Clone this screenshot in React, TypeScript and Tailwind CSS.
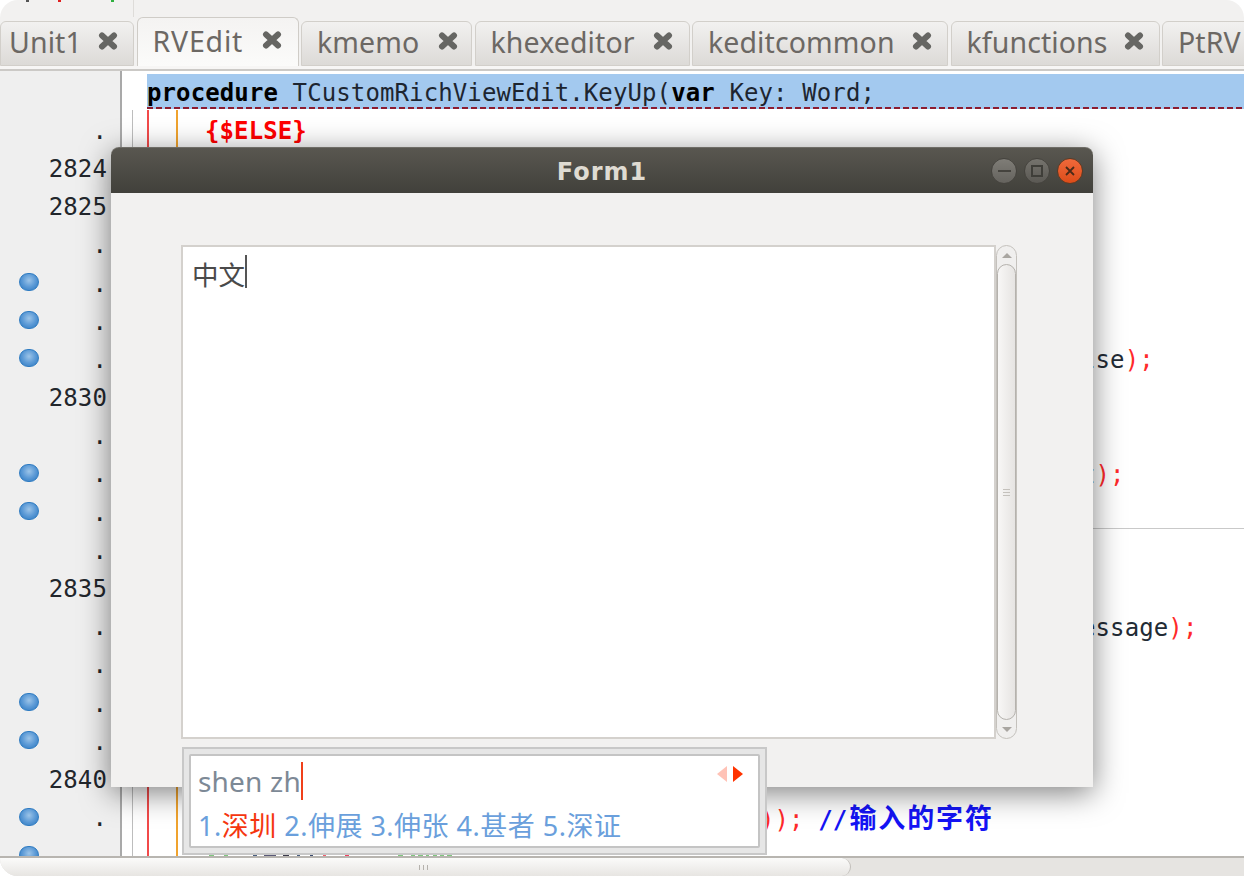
import React from 'react';

const codeFont = "font-['DejaVu_Sans_Mono','Noto_Sans_CJK_SC',monospace] text-[24px] tracking-[0.11px] leading-[38px]";

const tabs = [
  { name: 'Unit1', cls: 'w-[134px] pl-[8px] pr-[15px]' },
  { name: 'RVEdit', cls: 'w-[162px] pl-[15px] pr-[16px]', active: true },
  { name: 'kmemo', cls: 'w-[171px] pl-[15px] pr-[13px]' },
  { name: 'khexeditor', cls: 'w-[215px] pl-[15px] pr-[16px]' },
  { name: 'keditcommon', cls: 'w-[256px] pl-[15px] pr-[15px]' },
  { name: 'kfunctions', cls: 'w-[209px] pl-[15px] pr-[15px]' },
  { name: 'PtRV', cls: 'w-[120px] pl-[15px] pr-[15px]', noClose: true },
];

// gutter label per line, null = nothing
const gutter: (string | null)[] = [
  null, '.', '2824', '2825', '.', '.', '.', '.', '2830', '.', '.', '.', '.',
  '2835', '.', '.', '.', '.', '2840', '.', null,
];

const breakpoints = [5, 6, 7, 10, 11, 16, 17, 19, 20];

const specks = [
  [209, 5, '#7fc67f'], [224, 4, '#7fc67f'], [253, 4, '#4a5f80'], [264, 12, '#5a5a78'], [283, 6, '#3a3a4a'],
  [297, 3, '#4a5f80'], [310, 3, '#3a4a70'], [323, 3, '#f06070'], [345, 4, '#f04060'], [398, 5, '#7fc67f'],
  [411, 4, '#7fc67f'], [418, 5, '#7fc67f'], [426, 3, '#7fc67f'], [433, 4, '#7fc67f'], [440, 4, '#7fc67f'], [447, 5, '#7fc67f'],
] as const;

const CloseX = () => (
  <svg width="20" height="18" viewBox="0 0 20 18" className="shrink-0 -mt-[2px]">
    <path d="M4 3.5 L16 14.5 M16 3.5 L4 14.5" stroke="#666663" strokeWidth="6" strokeLinecap="round" />
    <path d="M8 9 L12 9" stroke="#666663" strokeWidth="7" />
  </svg>
);

const Ball = () => (
  <span className="block w-[20px] h-[18px] rounded-full border border-[#2f7cc2] bg-[radial-gradient(circle_at_50%_40%,#9cc4e8_0%,#5c9ad6_50%,#2a76be_100%)]" />
);

const CodeLine = ({ i }: { i: number }) => {
  if (i === 0) {
    return (
      <div className="relative ml-[25px] h-full bg-[#a3c9ef] whitespace-pre text-[#1d2530]">
        <b className="text-black">procedure</b> TCustomRichViewEdit.KeyUp(<b className="text-black">var</b> Key: Word;
        <span className="absolute left-0 right-0 bottom-0 h-[2px] bg-[repeating-linear-gradient(90deg,#8c1c30_0,#8c1c30_6px,transparent_6px,transparent_9px)]" />
      </div>
    );
  }
  if (i === 1) return <div className="pl-[83px] font-bold text-[#ff0000]">{'{$ELSE}'}</div>;
  if (i === 7) return <div className="pl-[959px] text-[#222b35]">lse<span className="text-[#ff2a2a]">);</span></div>;
  if (i === 10) return <div className="pl-[959px] text-[#222b35]">t<span className="text-[#ff2a2a]">);</span></div>;
  if (i === 11) return <div className="h-full border-b border-[#c9c9c9]" />;
  if (i === 14) return <div className="pl-[959px] text-[#222b35]">essage<span className="text-[#ff2a2a]">);</span></div>;
  if (i === 19) {
    return (
      <div className="pl-[638px] whitespace-pre text-[#ff2a2a]">
        {')); '}
        <b className="text-[#1414f5]">//<span className="ml-[2px] text-[27px] tracking-[1.9px]">输入的字符</span></b>
      </div>
    );
  }
  return null;
};

const Scrollbar = () => (
  <div className="w-[21px] h-full flex flex-col rounded-full border border-[#c4c1bc] bg-[#f0efee]">
    <div className="h-[18px] shrink-0 flex items-center justify-center">
      <span className="w-0 h-0 border-x-[5px] border-x-transparent border-b-[5px] border-b-[#a9a6a1]" />
    </div>
    <div className="flex-1 rounded-full border border-[#b5b2ad] bg-gradient-to-r from-[#f8f7f6] to-[#e6e4e2] flex items-center justify-center">
      <div className="flex flex-col gap-[2px]">
        <span className="block w-[7px] h-px bg-[#c4c1bc]" />
        <span className="block w-[7px] h-px bg-[#c4c1bc]" />
        <span className="block w-[7px] h-px bg-[#c4c1bc]" />
      </div>
    </div>
    <div className="h-[18px] shrink-0 flex items-center justify-center">
      <span className="w-0 h-0 border-x-[5px] border-x-transparent border-t-[5px] border-t-[#a9a6a1]" />
    </div>
  </div>
);

const App = () => {
  return (
    <div className="relative w-[1244px] h-[876px] overflow-hidden bg-white">
      <div className="w-full h-full flex flex-col overflow-hidden rounded-t-[18px] rounded-bl-[18px] bg-[#f2f1f0]">
        {/* toolbar remnant */}
        <div className="h-[17px] shrink-0 relative">
          <div className="w-[134px] h-full border-r border-[#dedcd9]" />
          <span className="absolute left-[26px] top-0 w-[3px] h-[2px] bg-[#555]" />
          <span className="absolute left-[58px] top-0 w-[3px] h-[2px] bg-[#e02020]" />
          <span className="absolute left-[111px] top-0 w-[3px] h-[2px] bg-[#30b040]" />
        </div>

        {/* Tabs */}
        <div className="h-[49px] shrink-0 flex items-end gap-[2.5px] overflow-hidden font-['Noto_Sans',sans-serif] text-[28.5px] text-[#6c6864]">
          {tabs.map((t) =>
            <div
              key={t.name}
              className={
                t.active
                  ? `${t.cls} h-[49px] pb-[2px] shrink-0 flex items-center justify-between rounded-t-[6px] border border-b-0 border-[#cfccc7] bg-gradient-to-b from-[#f4f3f2] to-[#fbfbfa]`
                  : `${t.cls} h-[45px] pb-[3px] shrink-0 flex items-center justify-between rounded-t-[6px] border border-[#d2cfca] bg-gradient-to-b from-[#f2f1f0] to-[#dcdad7]`
              }
            >
              <span className={t.active ? 'leading-none tracking-[0.8px]' : 'leading-none tracking-[0.1px]'}>{t.name}</span>
              {!t.noClose && <CloseX />}
            </div>
          )}
        </div>
        <div className="h-[5px] shrink-0 border-b-2 border-[#cbc9c6] bg-[#f7f6f5]" />

        {/* Editor */}
        <div className={`flex-1 min-h-0 flex overflow-hidden ${codeFont}`}>
          <div className="w-[120px] shrink-0 bg-[#efefef] text-[#22262c]">
            {gutter.map((g, i) => (
              <div key={i} className="h-[38.2px] flex items-center pl-[19px] pr-[13px]">
                <div className="w-[20px] shrink-0 pt-[2px]">{breakpoints.includes(i) && <Ball />}</div>
                <div className="flex-1 text-right pt-[5px]">{g}</div>
              </div>
            ))}
          </div>
          <div className="relative flex-1 border-l-2 border-[#a9a9a9] bg-white">
            <span className="absolute left-[10px] top-[39px] bottom-0 w-px bg-[#bdbdbd]" />
            <span className="absolute left-[25px] top-[39px] bottom-0 w-[2px] bg-[#f24a4a]" />
            <span className="absolute left-[54px] top-[39px] bottom-0 w-[2px] bg-[#f0a32e]" />
            {gutter.map((_, i) => (
              <div key={i} className="relative h-[38.2px] pt-[3px] first:pt-0">
                <CodeLine i={i} />
              </div>
            ))}
          </div>
        </div>

        {/* Horizontal scrollbar */}
        <div className="h-[20px] shrink-0 border-t-2 border-[#b8b5b0] bg-[#e6e4e1]">
          <div className="w-[851px] h-full flex items-center justify-center gap-[3px] pr-[4px] rounded-r-full border-r border-[#c2bfba] bg-gradient-to-b from-[#fbfbfa] to-[#e7e5e2]">
            <span className="w-px h-[5px] bg-[#b5b2ad]" />
            <span className="w-px h-[5px] bg-[#b5b2ad]" />
            <span className="w-px h-[5px] bg-[#b5b2ad]" />
          </div>
        </div>
      </div>

      {/* clipped top of the last code line */}
      <svg className="absolute left-0 top-[854px]" width="460" height="2">
        {specks.map(([x, w, c]) => (
          <rect key={x} x={x} y="0" width={w} height="2" fill={c} />
        ))}
      </svg>

      {/* Form1 window */}
      <div className="absolute left-[111px] top-[147px] w-[982px] h-[640px] flex flex-col rounded-t-[8px] bg-[#f2f1f0] shadow-[0_6px_30px_rgba(0,0,0,0.5)]">
        <div className="relative h-[46px] shrink-0 flex items-center justify-center rounded-t-[8px] border-t border-[#6f6d67] bg-gradient-to-b from-[#595750] to-[#41403b]">
          <span className="pt-[2px] font-['DejaVu_Sans',sans-serif] font-bold text-[24px] tracking-[1px] text-[#dfdbd2]">Form1</span>
          <div className="absolute right-[10px] top-[10px] flex gap-[7px]">
            <span className="w-[26px] h-[26px] rounded-full border border-[#45433e] bg-gradient-to-b from-[#7f7d77] to-[#65635e] flex items-center justify-center">
              <span className="w-[13px] h-[2px] bg-[#45433e]" />
            </span>
            <span className="w-[26px] h-[26px] rounded-full border border-[#45433e] bg-gradient-to-b from-[#75736d] to-[#5b5954] flex items-center justify-center">
              <span className="w-[12px] h-[12px] border-2 border-[#3f3e39]" />
            </span>
            <span className="w-[26px] h-[26px] rounded-full border border-[#5c3a24] bg-gradient-to-b from-[#f0693a] to-[#dc4c18] flex items-center justify-center">
              <svg width="12" height="12" viewBox="0 0 12 12">
                <path d="M2 2 L10 10 M10 2 L2 10" stroke="#4a2a18" strokeWidth="1.8" />
              </svg>
            </span>
          </div>
        </div>
        <div className="flex-1 pt-[52px] pl-[70px]">
          <div className="flex h-[494px]">
            <div className="w-[815px] h-full border-2 border-[#d4d1cd] bg-white pl-[9px] pt-[10px] flex items-start font-['Noto_Sans_CJK_SC',sans-serif] text-[26.5px] leading-[34px] text-[#4a4a4a]">
              <span>中文</span>
              <span className="w-[2px] h-[33px] -mt-[2px] bg-[#555]" />
            </div>
            <Scrollbar />
          </div>
        </div>
      </div>

      {/* IME popup */}
      <div className="absolute left-[182px] top-[747px] w-[585px] h-[108px] border-2 border-[#c8c8c8] bg-[#e6e6e6] p-[5px]">
        <div className="relative h-full flex flex-col pl-[7px] rounded-[2px] border-2 border-[#c4c4c4] bg-white font-['Noto_Sans','Noto_Sans_CJK_SC',sans-serif] text-[27px]">
          <div className="h-[50px] flex items-center text-[#7d8996]">
            <span className="leading-none text-[28px] tracking-[0.2px]">shen zh</span>
            <span className="w-[2px] h-[38px] bg-[#f0401a]" />
          </div>
          <div className="flex-1 flex items-center whitespace-pre tracking-[0.5px] leading-none text-[#6a9fdc] pb-[1px]">
            <span>1.</span><span className="text-[#f5360f]">深圳</span><span> 2.伸展 3.伸张 4.甚者 5.深证</span>
          </div>
          <div className="absolute right-[15px] top-[10px] flex gap-[6px]">
            <span className="w-0 h-0 border-y-[8px] border-y-transparent border-r-[10px] border-r-[#ffc2b6]" />
            <span className="w-0 h-0 border-y-[8px] border-y-transparent border-l-[10px] border-l-[#ff3300]" />
          </div>
        </div>
      </div>
    </div>
  );
};

export default App;
